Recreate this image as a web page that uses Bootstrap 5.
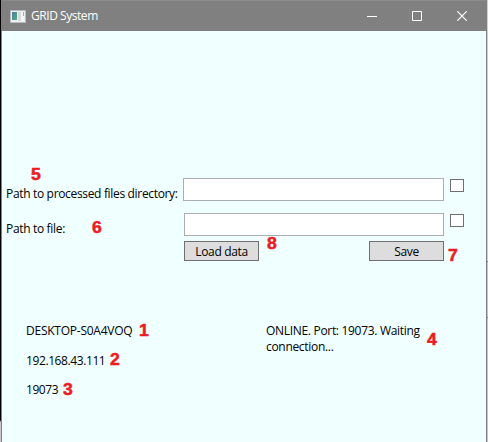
<!DOCTYPE html>
<html lang="en">
<head>
<meta charset="utf-8">
<title>GRID System</title>
<link href="https://cdn.jsdelivr.net/npm/bootstrap@5.3.0/dist/css/bootstrap.min.css" rel="stylesheet">
<style>
body{width:488px;height:442px;font:12px/16px "Open Sans","Noto Sans",sans-serif;color:#000;background:linear-gradient(#000 0 420px,#c8c8c8 422px)}
.app-window{width:486px;height:442px;margin-left:1px;border:solid #808080;border-width:0 1px;background:#f0ffff}
.edge{width:1px;height:442px;background:linear-gradient(#d0d0d0 0 261px,#888 261px 262px,#c4c4c4 262px 317px,#888 317px 318px,#c4c4c4 318px)}
.titlebar{height:31px;background:#808080;border-top:1px solid #8b8b8b;color:#fff;padding-left:8px}
.titlebar svg{display:block}
.caption-text{margin-left:5px;letter-spacing:-.45px}
.caption-set{margin-right:2px}
.caption-btn{width:45px;height:30px;display:grid;place-items:center}
.form-area{padding:147px 0 0 4px}
.field-row{height:23px}
.field-row + .field-row{margin-top:12px}
.field-label{width:177px;white-space:nowrap;letter-spacing:-.33px}
.text-box{height:23px;width:261px;border:1px solid #abadb3;border-radius:0;padding:0 4px;font-size:12px}
.text-box.second{width:260px;margin-left:1px}
.tick-box{appearance:none;width:14px;height:13px;border:1px solid #707070;background:#fff;margin:1px 0 0 6px}
.push-btn{width:75px;height:20px;padding:0;border:1px solid #707070;border-radius:0;background:#ddd;font-size:12px;line-height:19px;color:#000;letter-spacing:-.35px}
.button-row{margin:5px 0 0 178px;width:260px}
.status{margin:62px 0 0 24px}
.host-info{width:240px}
.host-name{letter-spacing:-.24px}
.host-ip{margin-top:14px;letter-spacing:-.4px}
.host-port{margin-top:13px;letter-spacing:-.45px}
.connection{letter-spacing:-.31px}
.marker{position:absolute;font:bold 16px/16px "Liberation Sans",Arial,sans-serif;color:#ed1c24;-webkit-text-stroke:.5px #ed1c24;transform:scaleX(1.1);transform-origin:0 0}
.m1{left:139px;top:323px}.m2{left:110px;top:352px}.m3{left:63px;top:382px}.m4{left:427px;top:332px}
.m5{left:31px;top:167px}.m6{left:92px;top:220px}.m7{left:448px;top:248px}.m8{left:267px;top:236px}
</style>
<script src="https://cdn.jsdelivr.net/npm/bootstrap@5.3.0/dist/js/bootstrap.bundle.min.js"></script>
</head>
<body class="d-flex m-0 overflow-hidden position-relative">
<main class="app-window">
  <header class="titlebar d-flex align-items-center">
    <svg width="16" height="13" viewBox="0 0 16 13"><defs><linearGradient id="g" x2="1" y2="1"><stop stop-color="#477ea8"/><stop offset="1" stop-color="#55ad78"/></linearGradient></defs><path fill="#edf0f1" stroke="#b9bdbf" d="M.5.5h15v12H.5z"/><path fill="url(#g)" d="M2 2h5v8H2z"/><path fill="#d6dadc" d="M8 2h3v9H8z"/><path fill="#f5f7f7" d="M11 2h3v9h-3z"/><path fill="#8bbcb0" d="M13 2h1v4h-1z"/></svg>
    <span class="caption-text">GRID System</span>
    <div class="caption-set d-flex ms-auto">
      <span class="caption-btn"><svg width="10" height="10"><path stroke="#fff" d="M0 5.5h10"/></svg></span>
      <span class="caption-btn"><svg width="10" height="10"><path fill="none" stroke="#fff" d="M.5.5h9v9h-9z"/></svg></span>
      <span class="caption-btn"><svg width="10" height="10"><path stroke="#fff" stroke-width="1.2" d="M.3.3l9.4 9.4M9.7.3.3 9.7"/></svg></span>
    </div>
  </header>
  <form class="form-area">
    <div class="field-row d-flex">
      <label class="field-label pt-2" for="dir">Path to processed files directory:</label>
      <input id="dir" class="form-control text-box"><input type="checkbox" class="tick-box" aria-label="Directory">
    </div>
    <div class="field-row d-flex">
      <label class="field-label pt-2" for="file">Path to file:</label>
      <input id="file" class="form-control text-box second"><input type="checkbox" class="tick-box" aria-label="File">
    </div>
    <div class="button-row d-flex justify-content-between">
      <button type="button" class="btn push-btn">Load data</button>
      <button type="button" class="btn push-btn">Save</button>
    </div>
  </form>
  <section class="status d-flex">
    <div class="host-info">
      <div><span class="host-name">DESKTOP-S0A4VOQ</span></div>
      <div class="host-ip">192.168.43.111</div>
      <div class="host-port">19073</div>
    </div>
    <div class="connection">ONLINE. Port: 19073. Waiting<br>connection...</div>
  </section>
</main>
<div class="edge"></div>
<span class="marker m1">1</span><span class="marker m2">2</span><span class="marker m3">3</span><span class="marker m4">4</span>
<span class="marker m5">5</span><span class="marker m6">6</span><span class="marker m7">7</span><span class="marker m8">8</span>
</body>
</html>
